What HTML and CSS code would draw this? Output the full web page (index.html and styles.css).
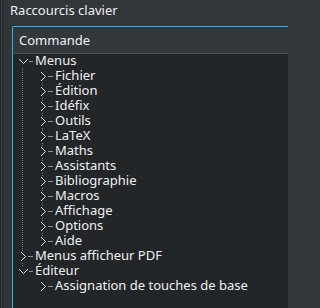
FILE: index.html
```html
<!DOCTYPE html>
<html lang="fr">
<head>
<meta charset="utf-8">
<title>Raccourcis clavier</title>
<link rel="stylesheet" href="styles.css">
</head>
<body>
<div class="window">
  <div class="strip"></div>
  <div class="main">
    <div class="title">Raccourcis clavier</div>
    <div class="frame">
      <div class="header">Commande</div>
      <div class="tree">
        <ul class="level">
          <li class="node has-next">
            <div class="row"><svg class="tw" viewBox="0 0 22 15"><rect class="bg" x="5" y="2" width="12" height="11"/><polyline class="chev" points="6,5 10.5,9.5 15,5"/><line class="dash" x1="16" y1="7.5" x2="20" y2="7.5"/></svg><span class="label">Menus</span></div>
            <ul class="level">
              <li class="node has-next"><div class="row"><svg class="tw" viewBox="0 0 22 15"><rect class="bg" x="5" y="2" width="11" height="11"/><polyline class="chev" points="8,3 12.5,7.5 8,12"/><line class="dash" x1="15" y1="7.5" x2="20" y2="7.5"/></svg><span class="label">Fichier</span></div></li>
              <li class="node has-next"><div class="row"><svg class="tw" viewBox="0 0 22 15"><rect class="bg" x="5" y="2" width="11" height="11"/><polyline class="chev" points="8,3 12.5,7.5 8,12"/><line class="dash" x1="15" y1="7.5" x2="20" y2="7.5"/></svg><span class="label">Édition</span></div></li>
              <li class="node has-next"><div class="row"><svg class="tw" viewBox="0 0 22 15"><rect class="bg" x="5" y="2" width="11" height="11"/><polyline class="chev" points="8,3 12.5,7.5 8,12"/><line class="dash" x1="15" y1="7.5" x2="20" y2="7.5"/></svg><span class="label">Idéfix</span></div></li>
              <li class="node has-next"><div class="row"><svg class="tw" viewBox="0 0 22 15"><rect class="bg" x="5" y="2" width="11" height="11"/><polyline class="chev" points="8,3 12.5,7.5 8,12"/><line class="dash" x1="15" y1="7.5" x2="20" y2="7.5"/></svg><span class="label">Outils</span></div></li>
              <li class="node has-next"><div class="row"><svg class="tw" viewBox="0 0 22 15"><rect class="bg" x="5" y="2" width="11" height="11"/><polyline class="chev" points="8,3 12.5,7.5 8,12"/><line class="dash" x1="15" y1="7.5" x2="20" y2="7.5"/></svg><span class="label">LaTeX</span></div></li>
              <li class="node has-next"><div class="row"><svg class="tw" viewBox="0 0 22 15"><rect class="bg" x="5" y="2" width="11" height="11"/><polyline class="chev" points="8,3 12.5,7.5 8,12"/><line class="dash" x1="15" y1="7.5" x2="20" y2="7.5"/></svg><span class="label">Maths</span></div></li>
              <li class="node has-next"><div class="row"><svg class="tw" viewBox="0 0 22 15"><rect class="bg" x="5" y="2" width="11" height="11"/><polyline class="chev" points="8,3 12.5,7.5 8,12"/><line class="dash" x1="15" y1="7.5" x2="20" y2="7.5"/></svg><span class="label">Assistants</span></div></li>
              <li class="node has-next"><div class="row"><svg class="tw" viewBox="0 0 22 15"><rect class="bg" x="5" y="2" width="11" height="11"/><polyline class="chev" points="8,3 12.5,7.5 8,12"/><line class="dash" x1="15" y1="7.5" x2="20" y2="7.5"/></svg><span class="label">Bibliographie</span></div></li>
              <li class="node has-next"><div class="row"><svg class="tw" viewBox="0 0 22 15"><rect class="bg" x="5" y="2" width="11" height="11"/><polyline class="chev" points="8,3 12.5,7.5 8,12"/><line class="dash" x1="15" y1="7.5" x2="20" y2="7.5"/></svg><span class="label">Macros</span></div></li>
              <li class="node has-next"><div class="row"><svg class="tw" viewBox="0 0 22 15"><rect class="bg" x="5" y="2" width="11" height="11"/><polyline class="chev" points="8,3 12.5,7.5 8,12"/><line class="dash" x1="15" y1="7.5" x2="20" y2="7.5"/></svg><span class="label">Affichage</span></div></li>
              <li class="node has-next"><div class="row"><svg class="tw" viewBox="0 0 22 15"><rect class="bg" x="5" y="2" width="11" height="11"/><polyline class="chev" points="8,3 12.5,7.5 8,12"/><line class="dash" x1="15" y1="7.5" x2="20" y2="7.5"/></svg><span class="label">Options</span></div></li>
              <li class="node"><div class="row"><svg class="tw" viewBox="0 0 22 15"><rect class="bg" x="5" y="2" width="11" height="11"/><polyline class="chev" points="8,3 12.5,7.5 8,12"/><line class="dash" x1="15" y1="7.5" x2="20" y2="7.5"/></svg><span class="label">Aide</span></div></li>
            </ul>
          </li>
          <li class="node has-next">
            <div class="row"><svg class="tw" viewBox="0 0 22 15"><rect class="bg" x="5" y="2" width="11" height="11"/><polyline class="chev" points="8,3 12.5,7.5 8,12"/><line class="dash" x1="15" y1="7.5" x2="20" y2="7.5"/></svg><span class="label">Menus afficheur PDF</span></div>
          </li>
          <li class="node">
            <div class="row"><svg class="tw" viewBox="0 0 22 15"><rect class="bg" x="5" y="2" width="12" height="11"/><polyline class="chev" points="6,5 10.5,9.5 15,5"/><line class="dash" x1="16" y1="7.5" x2="20" y2="7.5"/></svg><span class="label">Éditeur</span></div>
            <ul class="level">
              <li class="node"><div class="row"><svg class="tw" viewBox="0 0 22 15"><rect class="bg" x="5" y="2" width="11" height="11"/><polyline class="chev" points="8,3 12.5,7.5 8,12"/><line class="dash" x1="15" y1="7.5" x2="20" y2="7.5"/></svg><span class="label">Assignation de touches de base</span></div></li>
            </ul>
          </li>
        </ul>
      </div>
    </div>
  </div>
</div>
</body>
</html>
```

FILE: styles.css
```css
html, body {
  margin: 0;
  padding: 0;
  width: 288px;
  height: 308px;
  overflow: hidden;
  background: #31363b;
}

body {
  font-family: "Noto Sans", "DejaVu Sans", sans-serif;
  font-size: 13px;
  color: #eff0f1;
}

.window {
  display: flex;
  height: 308px;
}

.strip {
  flex: none;
  width: 4px;
  background: linear-gradient(to right, #26292c 0 1px, #3a3f44 1px 2px, #2a2e32 2px 4px);
}

.main {
  flex: 1;
  min-width: 0;
  overflow: hidden;
}

.title {
  padding: 3px 0 0 6px;
  height: 15px;
  line-height: 15px;
  margin-bottom: 8px;
  white-space: nowrap;
}

.frame {
  margin-left: 8px;
  margin-right: -12px;
  height: 281px;
  border-top: 1px solid #3daee9;
  border-left: 1px solid #3daee9;
  border-top-left-radius: 2px;
  background: #232629;
  overflow: hidden;
}

.header {
  height: 26px;
  line-height: 26px;
  padding-left: 6px;
  background: #33383d;
  border-bottom: 1px solid #4b5055;
  white-space: nowrap;
}

.tree {
  background: #232629;
}

.level {
  list-style: none;
  margin: 0;
  padding: 0;
}

.level .level {
  padding-left: 20px;
}

.node {
  position: relative;
}

.has-next::before {
  content: "";
  position: absolute;
  left: 9px;
  top: 8px;
  bottom: -8px;
  border-left: 1px dotted #7c8084;
}

.row {
  position: relative;
  z-index: 1;
  display: flex;
  align-items: center;
  height: 15px;
}

.tw {
  flex: none;
  width: 22px;
  height: 15px;
}

.tw .bg {
  fill: #232629;
}

.tw .chev {
  fill: none;
  stroke: #e3e4e5;
  stroke-width: 1;
}

.tw .dash {
  stroke: #8d9195;
  stroke-width: 1;
}

.label {
  line-height: 13px;
  margin-bottom: 2px;
  white-space: nowrap;
}
```
